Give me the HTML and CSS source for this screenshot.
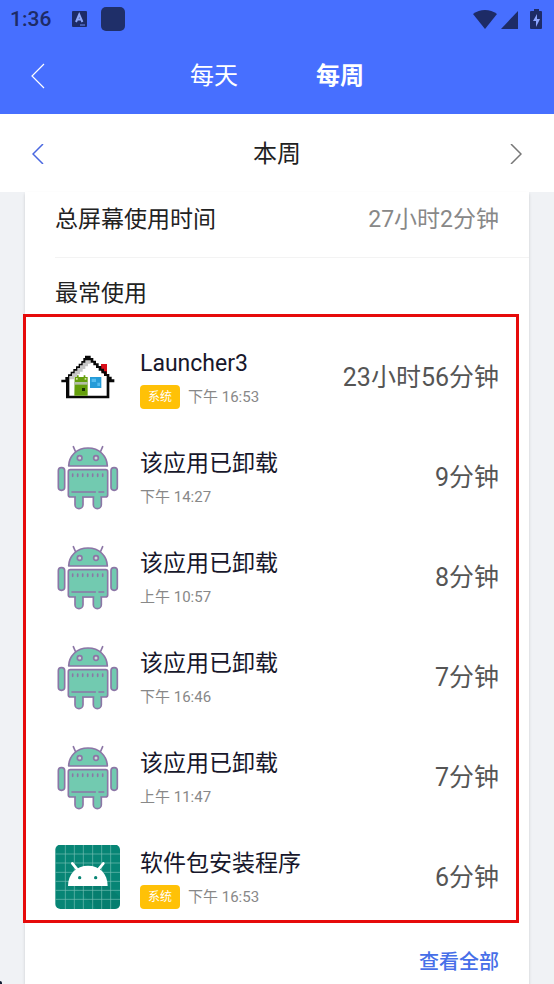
FILE: index.html
```html
<!DOCTYPE html>
<html lang="zh-CN">
<head>
    <meta charset="UTF-8">
    <meta name="viewport" content="width=device-width, initial-scale=1.0">
    <title>屏幕使用时间</title>
    <link rel="stylesheet" href="styles.css">
</head>
<body>
    <!-- Shared icons -->
    <svg class="sprite" aria-hidden="true">
        <symbol id="icon-android" viewBox="15 27 198 198">
            <g fill="#72cab0" stroke="#8c76a6" stroke-width="5" stroke-linejoin="round" stroke-linecap="round">
                <path d="M77 48L70 32M151 48L158 32" fill="none"/>
                <path d="M75 168v38a12 12 0 0 0 24 0v-24h31v24a12 12 0 0 0 24 0v-38z"/>
                <path d="M56 90C57 60 80 36 114 36s57 24 58 54z"/>
                <rect x="25" y="95" width="19" height="68" rx="9"/>
                <rect x="183" y="95" width="19" height="68" rx="9"/>
                <rect x="55" y="101" width="118" height="82" rx="6"/>
                <circle cx="89" cy="66" r="7" fill="#c9ded7"/>
                <circle cx="138" cy="66" r="7" fill="#c9ded7"/>
                <path d="M66 168h70M147 168h14" fill="none"/>
                <path d="M68 114v7M83 114v7M98 114v7M113 114v7M128 114v7M143 114v7M158 114v7" fill="none"/>
            </g>
            <path d="M78 171h18v15H78zM133 171h18v15h-18z" fill="#72cab0"/>
        </symbol>
    </svg>

    <header class="top">
        <div class="status-bar">
            <span class="clock">1:36</span>
            <svg class="status-keyboard" viewBox="0 0 15 16" aria-hidden="true">
                <rect width="15" height="16" rx="1" fill="#1d2b66"/>
                <path d="M4 11L7.200 3.500L10.400 11M5.200 8.500H9.200" fill="none" stroke="#8fa8fa" stroke-width="2"/>
                <path d="M8 14h5" stroke="#6f8cf5"/>
            </svg>
            <span class="status-app"></span>
            <svg class="status-signal" viewBox="0 0 71 21" aria-hidden="true">
                <g fill="#1d2b66">
                    <path d="M0 5C7-0.300 17-0.300 24 5L12 20z"/>
                    <path d="M45 2v18H28z"/>
                    <path d="M57 3q0-1 1-1h3V0h5v2h2q1 0 1 1v16q0 1-1 1H58q-1 0-1-1z"/>
                </g>
                <path d="M64 5L60 12h3v6l4-8h-3z" fill="#8ba4ff"/>
            </svg>
        </div>
        <nav class="tabs">
            <button type="button" class="icon-button" aria-label="返回">
                <svg class="chevron" viewBox="0 0 14 26"><path d="M13 1L1 13L13 25"/></svg>
            </button>
            <div class="tab-list">
                <button type="button" class="tab">每天</button>
                <button type="button" class="tab active">每周</button>
            </div>
        </nav>
    </header>

    <div class="week-bar">
        <button type="button" class="icon-button previous" aria-label="上一周">
            <svg class="chevron" viewBox="0 0 12 20"><path d="M11 0L1 10L11 20"/></svg>
        </button>
        <h1>本周</h1>
        <button type="button" class="icon-button next" aria-label="下一周">
            <svg class="chevron" viewBox="0 0 12 20"><path d="M1 0L11 10L1 20"/></svg>
        </button>
    </div>

    <main class="card">
        <div class="total">
            <span>总屏幕使用时间</span>
            <span class="total-time">27小时2分钟</span>
        </div>
        <h2>最常使用</h2>
        <ul class="app-list">
            <li class="app">
                <svg class="app-icon" viewBox="15 15 198 198" aria-hidden="true">
                    <path d="M153 72h18v30h-18z" fill="#d80d18"/>
                    <path d="M54 171V112L114 54L172 112v59z" fill="#fff"/>
                    <path d="M58 118h14v-7h10v-8h8v-8h8v-8h8v-8h8v-8h8v-11h-16l-48 44z" fill="#c6c6c6"/>
                    <path d="M105 47h17v7h8v8h8v8h8v8h8v8h8v8h8v8h8v8h7v8h8v9h-15v48H48v-48H34v-8h12v-8h8v-8h8v-8h8v-8h8v-8h8v-8h8v-8h6v-9h5zM106 61v7h-8v8h-8v8h-8v8h-8v8h-8v8h-8v59h112v-59h-8v-8h-8v-8h-8v-8h-8v-8h-8v-8h-8v-7z" fill="#080808" fill-rule="evenodd"/>
                    <path d="M74 111h7v-5h5v5h15v-5h5v5h7v56H73z" fill="#659f0c"/>
                    <path d="M72 126h41v8H72z" fill="#b4bea6"/>
                    <path d="M78 114h5v5h-5zM104 114h5v5h-5z" fill="#d1df9b"/>
                    <path d="M96 144h9v9h-9z" fill="#173300"/>
                    <path d="M120 111h34v33h-34z" fill="#249bd8"/>
                    <path d="M125 116h13v10h-13zM142 128h8v10h-8z" fill="#54bdf0"/>
                </svg>
                <div class="app-info">
                    <h3>Launcher3</h3>
                    <p><span class="badge">系统</span>下午 16:53</p>
                </div>
                <span class="duration">23小时56分钟</span>
            </li>
            <li class="app">
                <svg class="app-icon" aria-hidden="true"><use href="#icon-android"/></svg>
                <div class="app-info">
                    <h3>该应用已卸载</h3>
                    <p>下午 14:27</p>
                </div>
                <span class="duration">9分钟</span>
            </li>
            <li class="app">
                <svg class="app-icon" aria-hidden="true"><use href="#icon-android"/></svg>
                <div class="app-info">
                    <h3>该应用已卸载</h3>
                    <p>上午 10:57</p>
                </div>
                <span class="duration">8分钟</span>
            </li>
            <li class="app">
                <svg class="app-icon" aria-hidden="true"><use href="#icon-android"/></svg>
                <div class="app-info">
                    <h3>该应用已卸载</h3>
                    <p>下午 16:46</p>
                </div>
                <span class="duration">7分钟</span>
            </li>
            <li class="app">
                <svg class="app-icon" aria-hidden="true"><use href="#icon-android"/></svg>
                <div class="app-info">
                    <h3>该应用已卸载</h3>
                    <p>上午 11:47</p>
                </div>
                <span class="duration">7分钟</span>
            </li>
            <li class="app">
                <svg class="app-icon" viewBox="15 21 198 198" aria-hidden="true">
                    <rect x="16" y="20" width="194" height="193" rx="15" fill="#078575"/>
                    <path d="M74 144l66 69h55q15 0 15-15v-20l-42-40z" fill="#067668" opacity=".45"/>
                    <path d="M46 20v193M73 20v193M100 20v193M128 20v193M155 20v193M182 20v193M16 48h194M16 75h194M16 103h194M16 130h194M16 157h194M16 184h194" fill="none" stroke="#76bfb3" stroke-width="2"/>
                    <path d="M54 144C54 107 79 83 114 83s59 24 59 61z" fill="#fff"/>
                    <path d="M67 76l17 21M160 76l-17 21" stroke="#fff" stroke-width="8" stroke-linecap="round"/>
                    <circle cx="89" cy="119" r="5" fill="#078575"/>
                    <circle cx="137" cy="119" r="5" fill="#078575"/>
                </svg>
                <div class="app-info">
                    <h3>软件包安装程序</h3>
                    <p><span class="badge">系统</span>下午 16:53</p>
                </div>
                <span class="duration">6分钟</span>
            </li>
        </ul>
        <a class="see-all" href="#">查看全部</a>
    </main>
    <span class="corner"></span>
</body>
</html>
```

FILE: styles.css
```css
* {
    margin: 0;
    padding: 0;
    box-sizing: border-box;
}

body {
    position: relative;
    min-height: 100vh;
    display: flex;
    flex-direction: column;
    background-color: #f0f2f5;
    color: #222;
    font-family: Roboto, "Noto Sans CJK SC", sans-serif;
}

button {
    border: none;
    background: none;
    color: inherit;
    font: inherit;
    cursor: pointer;
}

.sprite {
    position: absolute;
    width: 0;
    height: 0;
}

/* Header */
.top {
    background-color: #476fff;
    color: white;
}

.status-bar {
    height: 38px;
    padding: 0 10px;
    display: flex;
    align-items: center;
    color: #1d2b66;
}

.clock {
    font-size: 21px;
    font-weight: 500;
    line-height: 38px;
}

.status-keyboard {
    width: 15px;
    height: 16px;
    margin-left: 21px;
}

.status-app {
    width: 24px;
    height: 24px;
    margin-left: 14px;
    border-radius: 5px;
    background-color: #1f2f69;
}

.status-signal {
    width: 71px;
    height: 21px;
    margin-left: auto;
}

.tabs,
.week-bar {
    display: grid;
    grid-template-columns: 44px 1fr 44px;
    align-items: center;
    padding: 0 16px;
}

.tabs {
    height: 76px;
}

.tab-list {
    display: flex;
    justify-content: center;
    gap: 78px;
}

.tab {
    font-size: 24px;
    line-height: 36px;
}

.tab.active {
    font-weight: bold;
}

.icon-button {
    height: 44px;
    display: flex;
    align-items: center;
    justify-content: center;
}

.chevron {
    width: 14px;
    height: 26px;
    fill: none;
    stroke: currentColor;
    stroke-width: 1.2;
}

/* Week switcher */
.week-bar {
    height: 78px;
    padding-top: 2px;
    background-color: white;
}

.week-bar .chevron {
    width: 12px;
    height: 20px;
    stroke-width: 1.5;
}

.week-bar h1 {
    font-size: 24px;
    font-weight: normal;
    line-height: 36px;
    text-align: center;
}

.previous {
    color: #4a68e0;
}

.next {
    color: #777;
}

/* Usage card */
.card {
    flex: 1;
    margin: 0 25px;
    padding-left: 30px;
    background-color: white;
    box-shadow: 0 2px 3px rgba(0, 0, 0, 0.15);
    display: flex;
    flex-direction: column;
}

.total {
    display: flex;
    justify-content: space-between;
    padding: 0 30px 9px 0;
    border-bottom: 1px solid #f3f3f3;
    font-size: 23px;
    line-height: 56px;
}

.total-time {
    color: #888;
}

.card h2 {
    padding-top: 2px;
    font-size: 23px;
    font-weight: normal;
    line-height: 68px;
}

.app-list {
    position: relative;
    padding-right: 30px;
    list-style: none;
}

/* Red frame round the most used apps */
.app-list::after {
    content: "";
    position: absolute;
    top: -14px;
    right: 10px;
    bottom: 5px;
    left: -32px;
    border: 3px solid #e60a0a;
    pointer-events: none;
}

.app {
    height: 100px;
    display: flex;
    align-items: center;
    gap: 19px;
}

.app-icon {
    flex: none;
    width: 66px;
    height: 66px;
}

.app-info {
    flex: 1;
}

.app-info h3 {
    color: #17172b;
    font-size: 23px;
    font-weight: normal;
    line-height: 34px;
}

.app-info p {
    display: flex;
    align-items: center;
    gap: 8px;
    margin-top: 4px;
    color: #888;
    font-size: 15px;
    line-height: 24px;
}

.badge {
    padding: 0 8px;
    border-radius: 4px;
    background-color: #ffc107;
    color: white;
    font-size: 12px;
    line-height: 24px;
}

.duration {
    color: #555;
    font-size: 25px;
    line-height: 38px;
}

.see-all {
    align-self: flex-end;
    margin-right: 30px;
    padding-top: 12px;
    color: #476fe8;
    font-size: 20px;
    font-weight: 500;
    line-height: 44px;
    text-decoration: none;
}

.corner {
    position: absolute;
    bottom: 0;
    left: 0;
    width: 2px;
    height: 3px;
    border-top-right-radius: 2px;
    background-color: #101a30;
}
```
